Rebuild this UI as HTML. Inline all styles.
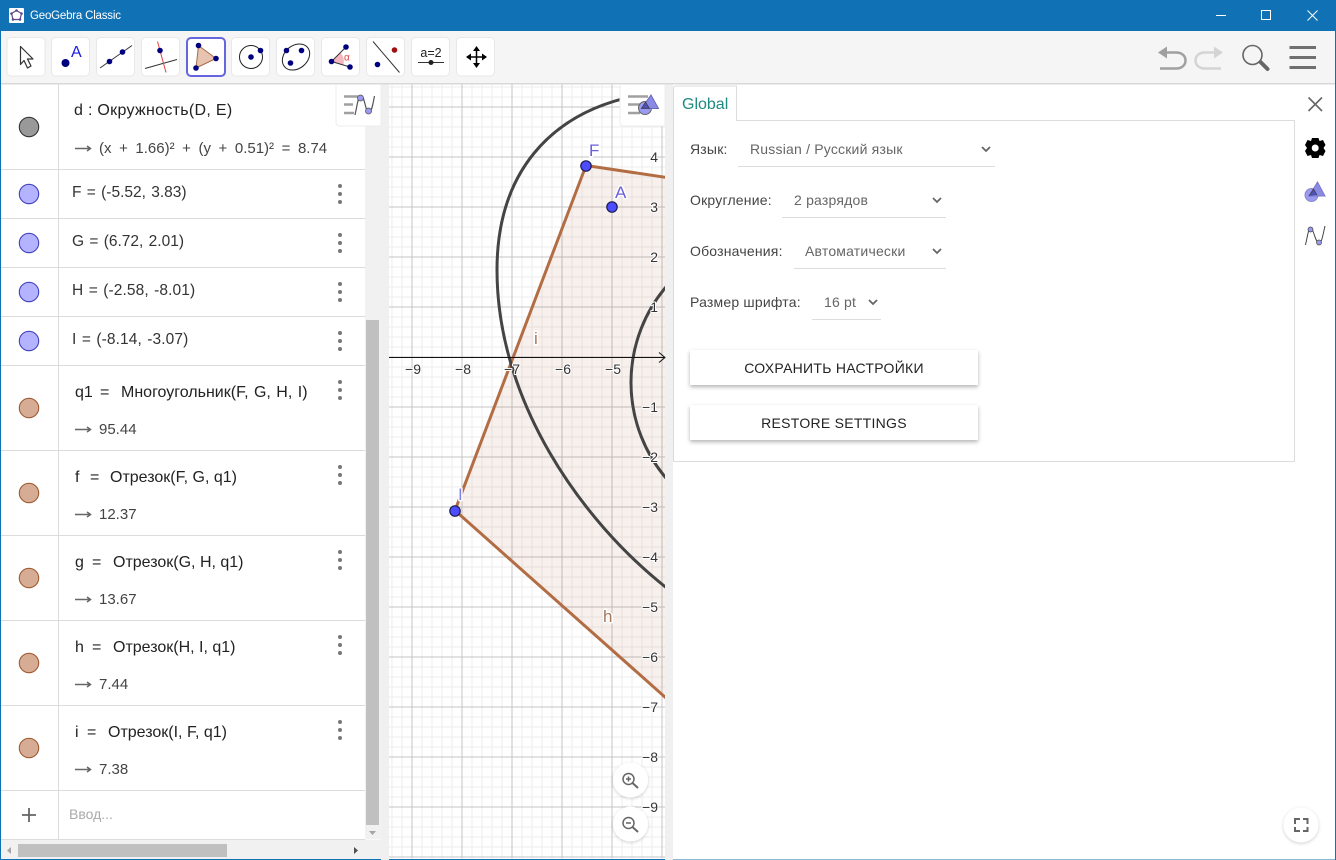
<!DOCTYPE html>
<html><head><meta charset="utf-8"><style>
html,body{margin:0;padding:0;width:1336px;height:860px;overflow:hidden;background:#fff;font-family:"Liberation Sans",sans-serif}
svg{position:absolute;left:0;top:0}
.t{position:absolute;white-space:nowrap;line-height:20px;height:20px}
.a{font-size:16px;color:#222}
.o{font-size:15px;color:#444}
.s{font-size:15.5px;color:#333}
.l{font-size:14px;color:#444;letter-spacing:.2px}
.v{font-size:14px;color:#666;letter-spacing:.2px}
.b{position:absolute;left:690px;width:288px;height:35px;line-height:37px;background:#fff;text-align:center;font-size:14px;letter-spacing:.27px;color:#222;box-shadow:0 2px 4px rgba(0,0,0,.3)}
</style></head><body>
<svg width="1336" height="860" viewBox="0 0 1336 860" font-family="Liberation Sans, sans-serif">
<defs>
<pattern id="g" patternUnits="userSpaceOnUse" x="411.5" y="106.5" width="50" height="50">
<path d="M10.5 0V50M20.5 0V50M30.5 0V50M40.5 0V50M0 10.5H50M0 20.5H50M0 30.5H50M0 40.5H50" stroke="#eeeeee" fill="none"/>
<path d="M.5 0V50M0 .5H50" stroke="#c4c4c4" fill="none"/>
</pattern>
<clipPath id="c"><rect x="389" y="84" width="276" height="776"/></clipPath>
<filter id="sh" x="-30%" y="-30%" width="160%" height="170%"><feDropShadow dx="0" dy="1" stdDeviation="1.5" flood-color="#000" flood-opacity=".2"/></filter>
</defs>
<!-- chrome -->
<rect width="1336" height="860" fill="#1171b5"/>
<rect x="1" y="31" width="1334" height="828" fill="#fff"/>
<rect x="1" y="31" width="1334" height="52" fill="#f5f5f5"/>
<rect x="1" y="83" width="1334" height="1.5" fill="#d8d8d8"/>
<!-- title icon -->
<rect x="9" y="8" width="15" height="15" rx="1" fill="#fff"/>
<path d="M16.500 10.500L21.500 13.500L20 19.500H13L11.500 13.500Z" fill="none" stroke="#5c4a8c" stroke-width="1.200"/>
<g fill="#5c4a8c"><circle cx="16.500" cy="10.500" r="1.300"/><circle cx="21.500" cy="13.500" r="1.300"/><circle cx="20" cy="19.500" r="1.300"/><circle cx="13" cy="19.500" r="1.300"/><circle cx="11.500" cy="13.500" r="1.300"/></g>
<!-- window buttons -->
<path d="M1216 15.500H1226" stroke="#fff"/>
<rect x="1261.500" y="10.500" width="9" height="9" fill="none" stroke="#fff"/>
<path d="M1307.500 10.500L1317.500 20.500M1317.500 10.500L1307.500 20.500" stroke="#fff"/>
<!-- toolbar buttons -->
<g fill="#fff" stroke="#e8e8e8">
<rect x="7" y="37.500" width="38" height="38.500" rx="4"/>
<rect x="51.500" y="37.500" width="38" height="38.500" rx="4"/>
<rect x="96.500" y="37.500" width="38" height="38.500" rx="4"/>
<rect x="141.500" y="37.500" width="38" height="38.500" rx="4"/>
<rect x="231.500" y="37.500" width="38" height="38.500" rx="4"/>
<rect x="276.500" y="37.500" width="38" height="38.500" rx="4"/>
<rect x="321.500" y="37.500" width="38" height="38.500" rx="4"/>
<rect x="366.500" y="37.500" width="38" height="38.500" rx="4"/>
<rect x="411.500" y="37.500" width="38" height="38.500" rx="4"/>
<rect x="456.500" y="37.500" width="38" height="38.500" rx="4"/>
</g>
<rect x="187" y="38" width="38" height="38" rx="4" fill="#fff" stroke="#6565e0" stroke-width="2"/>
<!-- move -->
<path d="M20.500 46.500L33 59H27.500L31 66L27.500 68L24 60.500L20.500 64.500Z" fill="#fff" stroke="#333" stroke-width="1.200" stroke-linejoin="round"/>
<!-- point -->
<circle cx="65.500" cy="63" r="4" fill="#00007f"/>
<text x="71" y="57" font-size="16" fill="#1a1ae0">A</text>
<!-- line -->
<path d="M100 68L132 45.500" stroke="#333" stroke-width="1"/>
<circle cx="109.500" cy="61.500" r="2.800" fill="#00007f"/><circle cx="122.500" cy="52" r="2.800" fill="#00007f"/>
<!-- perpendicular -->
<path d="M145 68.500L177 59.500" stroke="#333"/>
<path d="M157.500 41.500L166 72.500" stroke="#d44"/>
<circle cx="160" cy="50.500" r="2.800" fill="#00007f"/>
<!-- polygon -->
<path d="M198.500 45.500L216 58.500L196 68Z" fill="#e8c4b0" stroke="#a86a48" stroke-width="1"/>
<circle cx="198.500" cy="45.500" r="2.800" fill="#00007f"/><circle cx="216" cy="58.500" r="2.800" fill="#00007f"/><circle cx="196" cy="68" r="2.800" fill="#00007f"/>
<!-- circle -->
<circle cx="251" cy="57" r="11.500" fill="none" stroke="#222"/>
<circle cx="251" cy="57" r="2.800" fill="#00007f"/><circle cx="260.500" cy="50.500" r="2.800" fill="#00007f"/>
<!-- conic -->
<ellipse cx="296" cy="57" rx="15" ry="11.500" transform="rotate(-40 296 57)" fill="none" stroke="#222"/>
<circle cx="286.500" cy="50.500" r="2.800" fill="#00007f"/><circle cx="301.500" cy="50.500" r="2.800" fill="#00007f"/><circle cx="290.500" cy="63" r="2.800" fill="#00007f"/>
<!-- angle -->
<path d="M331.500 61.500L340.500 52.500Q345 58 343.500 65Z" fill="#f6b8c0"/>
<path d="M346 47L331.500 61.500L350 67" fill="none" stroke="#333"/>
<circle cx="346" cy="47" r="2.800" fill="#00007f"/><circle cx="331.500" cy="61.500" r="2.800" fill="#00007f"/><circle cx="350" cy="67" r="2.800" fill="#00007f"/>
<text x="344" y="60.500" font-size="10" fill="#d44">α</text>
<!-- reflect -->
<path d="M373 41.500L399.500 72.500" stroke="#333"/>
<circle cx="394.500" cy="50" r="2.800" fill="#a01010"/><circle cx="377.500" cy="64.500" r="2.800" fill="#00007f"/>
<!-- slider -->
<text x="431" y="57" font-size="12.500" fill="#222" text-anchor="middle">a=2</text>
<path d="M418 62.500H444" stroke="#333"/><circle cx="431" cy="62.500" r="2.500" fill="#222"/>
<!-- move view -->
<path d="M476.500 48V66M467 57H486" stroke="#000" stroke-width="1.500"/>
<path d="M476.500 46L480 51H473ZM476.500 68L480 63H473ZM466 57L471 53.500V60.500ZM487 57L482 53.500V60.500Z" fill="#000"/>
<!-- undo redo -->
<path d="M1165 52.500H1176C1182 52.500 1185.500 56 1185.500 60.500S1182 68.500 1176 68.500H1160" fill="none" stroke="#a0a0a0" stroke-width="2.500"/>
<path d="M1158 52.500L1167 46.500V58.500Z" fill="#a0a0a0"/>
<path d="M1216 52.500H1205C1199 52.500 1195.500 56 1195.500 60.500S1199 68.500 1205 68.500H1221" fill="none" stroke="#d4d4d4" stroke-width="2.500"/>
<path d="M1223 52.500L1214 46.500V58.500Z" fill="#d4d4d4"/>
<!-- search -->
<circle cx="1252.500" cy="55" r="9.500" fill="none" stroke="#666" stroke-width="1.600"/>
<path d="M1260.500 62L1267.500 69" stroke="#666" stroke-width="4" stroke-linecap="round"/>
<!-- menu -->
<path d="M1289.500 47.500H1316M1289.500 57.500H1316M1289.500 67.500H1316" stroke="#707070" stroke-width="3"/>

<!-- graphics -->
<rect x="381" y="84.500" width="8" height="776" fill="#f0f0f0"/>
<rect x="665" y="84.500" width="8" height="776" fill="#f0f0f0"/>
<rect x="389" y="84.500" width="276" height="774" fill="#fff"/>
<rect x="389" y="84.500" width="276" height="774" fill="url(#g)"/>
<g clip-path="url(#c)">
<path d="M586 165.500L1198 256.500L733 757.500L455 510.500Z" fill="#a0522d" fill-opacity=".085"/>
<path d="M586 165.500L1198 256.500L733 757.500L455 510.500Z" fill="none" stroke="#b36d45" stroke-width="3"/>
<circle cx="779" cy="382.500" r="148" fill="none" stroke="#444" stroke-width="3"/>
<path d="M640 95C548 112 497 175 497 270C497 400 580 520 668 589" fill="none" stroke="#444" stroke-width="3"/>
</g>
<path d="M389 357.500H664" stroke="#111"/>
<path d="M659 352.500L665 357.500L659 362.500" fill="none" stroke="#111"/>
<g font-size="14" fill="#333" stroke="#fff" stroke-width="2" paint-order="stroke" stroke-linejoin="round">
<text x="413" y="374" text-anchor="middle">−9</text>
<text x="463" y="374" text-anchor="middle">−8</text>
<text x="512" y="374" text-anchor="middle">−7</text>
<text x="563" y="374" text-anchor="middle">−6</text>
<text x="613" y="374" text-anchor="middle">−5</text>
<g text-anchor="end">
<text x="658" y="162">4</text><text x="658" y="212">3</text><text x="658" y="262">2</text><text x="658" y="312">1</text>
<text x="658" y="412">−1</text><text x="658" y="462">−2</text><text x="658" y="512">−3</text><text x="658" y="562">−4</text><text x="658" y="612">−5</text><text x="658" y="662">−6</text><text x="658" y="712">−7</text><text x="658" y="762">−8</text><text x="658" y="812">−9</text>
</g>
</g>
<g font-size="17" stroke="#fff" stroke-width="3" paint-order="stroke" stroke-linejoin="round">
<text x="589" y="156" fill="#6a5fd8">F</text>
<text x="615" y="198" fill="#6a5fd8">A</text>
<text x="534" y="344" fill="#a5785c">i</text>
<text x="603" y="622" fill="#a5785c">h</text>
<text x="458" y="500" fill="#8080e8">I</text>
</g>
<circle cx="586" cy="166" r="5.200" fill="#4d4dff" stroke="#1a1a50" stroke-width="1.200"/>
<circle cx="612" cy="207" r="5.200" fill="#4d4dff" stroke="#1a1a50" stroke-width="1.200"/>
<circle cx="455" cy="511" r="5.200" fill="#4d4dff" stroke="#1a1a50" stroke-width="1.200"/>
<!-- graphics style toggle -->
<path d="M620 84.500H665V126H624Q620 126 620 122Z" fill="#fff" stroke="#ececec"/>
<path d="M628 96.500H648M628 104.500H642M628 113H640" stroke="#a0a0a0" stroke-width="2.500"/>
<circle cx="645" cy="108" r="6.500" fill="#9a9af0" stroke="#666"/>
<path d="M651 95L658.500 108.500H641.500Z" fill="#8a8ae6" stroke="#6a6ab8"/>
<path d="M641.500 108.500L645.500 102L649.500 108.500Z" fill="#5050b0" stroke="#333" stroke-width=".6"/>
<!-- zoom buttons -->
<circle cx="630.500" cy="780" r="17.500" fill="#fff" filter="url(#sh)"/>
<circle cx="630.500" cy="824" r="17.500" fill="#fff" filter="url(#sh)"/>
<g fill="none" stroke="#666" stroke-width="1.500">
<circle cx="628.500" cy="779" r="5.500"/><path d="M626 779H631M628.500 776.500V781.500"/><path d="M632.500 783L638 788" stroke-width="2"/>
<circle cx="628.500" cy="823" r="5.500"/><path d="M626 823H631"/><path d="M632.500 827L638 832" stroke-width="2"/>
</g>

<!-- algebra -->
<rect x="1" y="84.500" width="364" height="755" fill="#fff"/>
<path d="M58.500 84V839" stroke="#dcdcdc"/>
<path d="M1 169.500H365M1 218.500H365M1 267.500H365M1 316.500H365M1 365.500H365M1 450.500H365M1 535.500H365M1 620.500H365M1 705.500H365M1 790.500H365M1 839.500H365" stroke="#dcdcdc"/>
<!-- scrollbars -->
<rect x="365" y="84.500" width="16" height="755" fill="#f1f1f1"/>
<rect x="366" y="320" width="13" height="505" fill="#c0c0c0"/>
<path d="M369 831H376L372.500 835Z" fill="#a5a5a5"/>
<rect x="1" y="840" width="380" height="19" fill="#f1f1f1"/>
<rect x="18" y="844" width="209" height="13" fill="#c0c0c0"/>
<path d="M11 847V854L7 850.500Z" fill="#a5a5a5"/>
<path d="M354 847V854L358 850.500Z" fill="#505050"/>
<!-- marbles -->
<g stroke-width="1.100">
<circle cx="29" cy="127" r="9.700" fill="#999" stroke="#333"/>
<g fill="#b3b3ff" stroke="#4040c0">
<circle cx="29" cy="194" r="9.700"/><circle cx="29" cy="243" r="9.700"/><circle cx="29" cy="292" r="9.700"/><circle cx="29" cy="341" r="9.700"/>
</g>
<g fill="#d6ac95" stroke="#a05a30">
<circle cx="29" cy="408" r="9.700"/><circle cx="29" cy="493" r="9.700"/><circle cx="29" cy="578" r="9.700"/><circle cx="29" cy="663" r="9.700"/><circle cx="29" cy="748" r="9.700"/>
</g>
</g>
<path d="M22 815H36M29 808V822" stroke="#666" stroke-width="1.800"/>
<!-- dots -->
<g fill="#777">
<circle cx="340" cy="186" r="2"/><circle cx="340" cy="194" r="2"/><circle cx="340" cy="202" r="2"/>
<circle cx="340" cy="235" r="2"/><circle cx="340" cy="243" r="2"/><circle cx="340" cy="251" r="2"/>
<circle cx="340" cy="284" r="2"/><circle cx="340" cy="292" r="2"/><circle cx="340" cy="300" r="2"/>
<circle cx="340" cy="333" r="2"/><circle cx="340" cy="341" r="2"/><circle cx="340" cy="349" r="2"/>
<circle cx="340" cy="382" r="2"/><circle cx="340" cy="390" r="2"/><circle cx="340" cy="398" r="2"/>
<circle cx="340" cy="467" r="2"/><circle cx="340" cy="475" r="2"/><circle cx="340" cy="483" r="2"/>
<circle cx="340" cy="552" r="2"/><circle cx="340" cy="560" r="2"/><circle cx="340" cy="568" r="2"/>
<circle cx="340" cy="637" r="2"/><circle cx="340" cy="645" r="2"/><circle cx="340" cy="653" r="2"/>
<circle cx="340" cy="722" r="2"/><circle cx="340" cy="730" r="2"/><circle cx="340" cy="738" r="2"/>
</g>
<!-- arrows -->
<g fill="none" stroke="#666" stroke-width="1.500">
<path d="M75 148.500H90M87 146L90.500 148.500L87 151"/>
<path d="M75 429.500H90M87 427L90.500 429.500L87 432"/>
<path d="M75 514.500H90M87 512L90.500 514.500L87 517"/>
<path d="M75 599.500H90M87 597L90.500 599.500L87 602"/>
<path d="M75 684.500H90M87 682L90.500 684.500L87 687"/>
<path d="M75 769.500H90M87 767L90.500 769.500L87 772"/>
</g>
<!-- algebra toggle -->
<path d="M336 84.500H381V126H340Q336 126 336 122Z" fill="#fff" stroke="#ececec"/>
<path d="M344 96.500H358M344 104.500H353M344 113H354" stroke="#a0a0a0" stroke-width="2.500"/>
<path d="M355 115C358 102 358 96 361 96C365 96 365 112 369 112C372 112 373 103 374.500 96" fill="none" stroke="#555" stroke-width="1.200"/>
<circle cx="360.500" cy="98" r="3" fill="#9a9af0" stroke="#555" stroke-width=".8"/><circle cx="368.500" cy="111" r="3" fill="#9a9af0" stroke="#555" stroke-width=".8"/>

<!-- settings -->
<rect x="673" y="84.500" width="662" height="775" fill="#fff"/>
<path d="M673.500 121V461.500H1294.500V120.500H736.500V86H676Q673.500 86 673.500 88.500V121" fill="none" stroke="#dcdcdc"/>
<g stroke="#ddd"><path d="M738 166.500H995M782 217.500H946M794 268.500H946M812 319.500H881"/></g>
<g fill="none" stroke="#666" stroke-width="1.800">
<path d="M982 147L986 151L990 147"/><path d="M933 198L937 202L941 198"/><path d="M933 249L937 253L941 249"/><path d="M869 300L873 304L877 300"/>
</g>
<path d="M1308.500 97.500L1322 111M1322 97.500L1308.500 111" stroke="#666" stroke-width="1.600"/>
<!-- gear -->
<path fill-rule="evenodd" d="M1312 138H1318.500L1319.500 141L1323 140L1325.500 145L1323.500 148L1325.500 151L1323 156L1319.500 155L1318.500 158H1312L1311 155L1307.500 156L1305 151L1307 148L1305 145L1307.500 140L1311 141ZM1315.200 144.500A3.500 3.500 0 1 0 1315.200 151.500A3.500 3.500 0 1 0 1315.200 144.500Z" fill="#000"/>
<!-- shapes -->
<circle cx="1311.500" cy="195" r="6.500" fill="#9a9af0" stroke="#8a8ac8"/>
<path d="M1317.500 182L1325 196H1309Z" fill="#8a8ae6" stroke="#7a7ac8"/>
<path d="M1309 196L1313.500 189L1317 195" fill="#5050b0" stroke="#333" stroke-width=".6"/>
<!-- function -->
<path d="M1305.500 245C1308 233 1309 227 1311 228C1314 230 1315 242 1319 243C1322 243 1323 234 1325 226" fill="none" stroke="#444" stroke-width="1"/>
<circle cx="1310.500" cy="229.500" r="2.500" fill="#9a9af0" stroke="#444" stroke-width=".7"/>
<circle cx="1319" cy="242.500" r="2.500" fill="#9a9af0" stroke="#444" stroke-width=".7"/>
<!-- fullscreen -->
<circle cx="1301" cy="825" r="17.500" fill="#fff" filter="url(#sh)"/>
<path d="M1295 824V819H1300M1303 819H1307.500V824M1307.500 827V831H1303M1300 831H1295V827" fill="none" stroke="#666" stroke-width="2"/>
</svg>

<div class="t" style="left:30px;top:6px;font-size:11.5px;color:#fff;letter-spacing:-.2px">GeoGebra Classic</div>

<div class="t a" style="left:74px;top:101px;letter-spacing:.3px">d : Окружность(D, E)</div>
<div class="t o" style="left:99px;top:139px;word-spacing:3.4px">(x + 1.66)² + (y + 0.51)² = 8.74</div>
<div class="t s" style="left:72px;top:183px;word-spacing:1px">F = (-5.52, 3.83)</div>
<div class="t s" style="left:72px;top:232px;word-spacing:1px">G = (6.72, 2.01)</div>
<div class="t s" style="left:72px;top:281px;word-spacing:1px;letter-spacing:.1px">H = (-2.58, -8.01)</div>
<div class="t s" style="left:72px;top:330px;word-spacing:1px;letter-spacing:.1px">I = (-8.14, -3.07)</div>

<div class="t a" style="left:75px;top:383px">q1</div><div class="t a" style="left:100px;top:383px">=</div><div class="t a" style="left:121px;top:383px;word-spacing:1px">Многоугольник(F, G, H, I)</div>
<div class="t o" style="left:99px;top:420px">95.44</div>
<div class="t a" style="left:75px;top:468px">f</div><div class="t a" style="left:90px;top:468px">=</div><div class="t a" style="left:110px;top:468px">Отрезок(F, G, q1)</div>
<div class="t o" style="left:99px;top:505px">12.37</div>
<div class="t a" style="left:75px;top:553px">g</div><div class="t a" style="left:92px;top:553px">=</div><div class="t a" style="left:113px;top:553px">Отрезок(G, H, q1)</div>
<div class="t o" style="left:99px;top:590px">13.67</div>
<div class="t a" style="left:75px;top:638px">h</div><div class="t a" style="left:92px;top:638px">=</div><div class="t a" style="left:113px;top:638px">Отрезок(H, I, q1)</div>
<div class="t o" style="left:99px;top:675px">7.44</div>
<div class="t a" style="left:75px;top:723px">i</div><div class="t a" style="left:87px;top:723px">=</div><div class="t a" style="left:108px;top:723px">Отрезок(I, F, q1)</div>
<div class="t o" style="left:99px;top:760px">7.38</div>
<div class="t" style="left:69px;top:804px;font-size:14px;color:#aaa">Ввод...</div>

<div class="t" style="left:682px;top:95px;font-size:16px;color:#1f8a80">Global</div>
<div class="t l" style="left:690px;top:139px">Язык:</div>
<div class="t v" style="left:750px;top:139px">Russian / Русский язык</div>
<div class="t l" style="left:690px;top:190px">Округление:</div>
<div class="t v" style="left:794px;top:190px">2 разрядов</div>
<div class="t l" style="left:690px;top:241px">Обозначения:</div>
<div class="t v" style="left:805px;top:241px">Автоматически</div>
<div class="t l" style="left:690px;top:292px">Размер шрифта:</div>
<div class="t v" style="left:824px;top:292px">16 pt</div>
<div class="b" style="top:350px">СОХРАНИТЬ НАСТРОЙКИ</div>
<div class="b" style="top:405px">RESTORE SETTINGS</div>
</body></html>
